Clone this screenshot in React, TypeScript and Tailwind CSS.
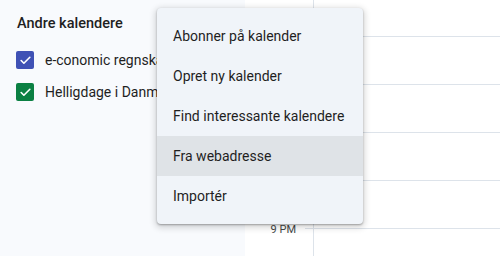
import { Check } from 'lucide-react';

const calendars = [
  { name: 'e-conomic regnskab', color: 'bg-[#3f51b5]' },
  { name: 'Helligdage i Danmark', color: 'bg-[#0b8043]' },
];

// hour rows; labels under the open menu are not drawn
const hours = [
  { id: 17, label: '' },
  { id: 18, label: '' },
  { id: 19, label: '' },
  { id: 20, label: '' },
  { id: 21, label: '9 PM' },
];

const menuItems = [
  'Abonner på kalender',
  'Opret ny kalender',
  'Find interessante kalendere',
  'Fra webadresse',
  'Importér',
];

function Sidebar() {
  return (
    <aside className="w-[245px] shrink-0 bg-[#f8fafd] pt-[14px] pl-[17px] pr-2">
      <h2 className="text-[14.5px] leading-[20px] font-medium text-[#1f1f1f]">Andre kalendere</h2>
      <ul className="mt-[10px]">
        {calendars.map((c) => (
          <li key={c.name} className="flex h-[32px] items-center">
            <span
              className={`ml-[-1px] flex h-[18px] w-[18px] shrink-0 items-center justify-center rounded-[2px] ${c.color}`}
            >
              <Check size={13} strokeWidth={3} className="text-white" />
            </span>
            <span className="ml-[11px] truncate text-[14px] text-[#1f1f1f]">{c.name}</span>
          </li>
        ))}
      </ul>
    </aside>
  );
}

function TimeGrid() {
  return (
    <div className="flex flex-1">
      <div className="w-[60px] shrink-0">
        <div className="h-[36px]" />
        {hours.map((h) => (
          <div key={h.id} className="flex h-[48px] flex-col items-end pr-[9px]">
            {h.label && (
              <span className="-translate-y-[5px] text-[11px] leading-[14px] text-[#444746]">
                {h.label}
              </span>
            )}
          </div>
        ))}
      </div>
      <div className="flex-1">
        <div className="flex h-[36px]">
          <div className="w-[8px]" />
          <div className="flex-1 border-l border-[#dde3ea]" />
        </div>
        {hours.map((h) => (
          <div key={h.id} className="flex h-[48px] border-t border-[#dde3ea]">
            <div className="w-[8px]" />
            <div className="flex-1 border-l border-[#dde3ea]" />
          </div>
        ))}
      </div>
    </div>
  );
}

function AddMenu() {
  return (
    <div className="absolute left-[157px] top-[8px] w-[206px] rounded-[4px] bg-[#f0f4f9] py-[8px] shadow-[0_1px_2px_0_rgba(0,0,0,0.3),0_2px_6px_2px_rgba(0,0,0,0.15)]">
      {menuItems.map((item) => (
        <div
          key={item}
          className={`flex h-[40px] items-center px-[16px] text-[14px] text-[#1f1f1f] ${
            item === 'Fra webadresse' ? 'bg-[#dfe3e7]' : ''
          }`}
        >
          {item}
        </div>
      ))}
    </div>
  );
}

export default function App() {
  return (
    <div
      className="relative flex h-[256px] w-[500px] overflow-hidden bg-white"
      style={{ fontFamily: 'Roboto, "Noto Sans", sans-serif' }}
    >
      <Sidebar />
      <TimeGrid />
      <AddMenu />
    </div>
  );
}
